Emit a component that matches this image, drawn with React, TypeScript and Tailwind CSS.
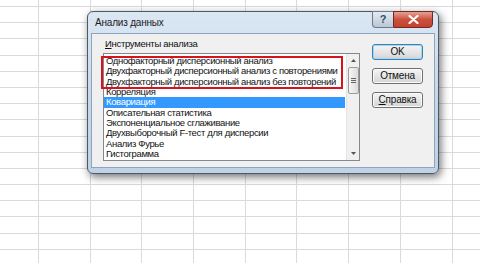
import React from 'react'

const items = [
  'Однофакторный дисперсионный анализ',
  'Двухфакторный дисперсионный анализ с повторениями',
  'Двухфакторный дисперсионный анализ без повторений',
  'Корреляция',
  'Ковариация',
  'Описательная статистика',
  'Экспоненциальное сглаживание',
  'Двухвыборочный F-тест для дисперсии',
  'Анализ Фурье',
  'Гистограмма',
]

function Sheet() {
  const rows = Array.from({ length: 17 })
  const cols = Array.from({ length: 10 })
  return (
    <div className="absolute inset-0 bg-white">
      <div className="grid grid-cols-[39px_repeat(9,51.7px)] grid-rows-[7px_repeat(16,16.2px)]">
        {rows.map((_, r) =>
          cols.map((_, c) => (
            <div key={r + '-' + c} className="border-r border-b border-[#d9dadb]" />
          ))
        )}
      </div>
    </div>
  )
}

function Btn({ children, primary }: { children: React.ReactNode; primary?: boolean }) {
  return (
    <button
      className={
        'shrink-0 w-[51px] h-[16px] rounded-[3px] border text-[10px] leading-none text-[#111] tracking-[-0.2px] bg-gradient-to-b from-[#f4f4f4] via-[#e6e6e6] to-[#d4d4d4] ' +
        (primary ? 'border-[#3c7fb1] shadow-[inset_0_0_0_1px_#9fd8f5]' : 'border-[#707070] shadow-[inset_0_0_0_1px_#fbfbfb]')
      }
    >
      {children}
    </button>
  )
}

export default function App() {
  return (
    <div className="relative w-[480px] h-[263px] overflow-hidden font-['Liberation_Sans',Arial,sans-serif]">
      <Sheet />

      {/* dialog window */}
      <div className="absolute left-[87px] top-[11px] w-[352px] h-[163px] rounded-[6px] border border-[#4b5866] bg-gradient-to-b from-[#dbe7f3] via-[#c8d8ea] to-[#bfd2e6] shadow-[2px_3px_8px_rgba(0,0,0,0.55)] flex flex-col px-[3px] pb-[5px]">
        <div className="h-[21px] flex items-start justify-between">
          <span className="pt-[6px] pl-[4px] text-[10px] tracking-[-0.2px] text-[#1b1b1b] leading-none">Анализ данных</span>
          <div className="flex -mt-px mr-[2px]">
            <div className="w-[21px] h-[17px] rounded-bl-[4px] border border-[#6c7a88] border-r-0 bg-gradient-to-b from-[#e3ebf3] to-[#b9c7d6] flex items-center justify-center text-[11px] font-bold text-[#3b4d60]">
              ?
            </div>
            <div className="w-[40px] h-[17px] rounded-br-[4px] border border-[#6e2a22] bg-gradient-to-b from-[#e8a093] via-[#c9503e] to-[#c4412d] flex items-center justify-center">
              <svg width="11" height="9" viewBox="0 0 11 9">
                <path d="M1.5 1 L9.5 8 M9.5 1 L1.5 8" stroke="#fff" strokeWidth="2.2" strokeLinecap="round" />
              </svg>
            </div>
          </div>
        </div>

        <div className="flex-1 min-h-0 border border-[#8fa4ba] bg-[#f0f0f0] flex pl-[11px] pr-[11px] pt-[4px] gap-[12px]">
          <div className="flex flex-col w-[257px] shrink-0 min-w-0">
            <div className="h-[15px] pl-[2px] text-[9.5px] leading-[12px] tracking-[-0.3px] text-[#111]">
              <span className="underline">И</span>нструменты анализа
            </div>
            <div className="relative h-[108px] border border-[#828790] bg-white flex">
              <div className="flex-1 min-w-0 overflow-hidden pt-[2px] pr-px">
                {items.map((t, i) => (
                  <div
                    key={t}
                    className={
                      'h-[10.33px] pl-[2px] text-[9.5px] leading-[10.33px] tracking-[-0.35px] whitespace-nowrap ' +
                      (i === 4 ? 'bg-[#3399ff] text-white' : 'text-[#111]')
                    }
                  >
                    {t}
                  </div>
                ))}
              </div>
              <div className="w-[13px] shrink-0 bg-[#f0f0f0] border-l border-[#e4e4e4] flex flex-col items-center">
                <div className="h-[13px] flex items-center justify-center">
                  <svg width="5" height="3" viewBox="0 0 5 3"><path d="M0 3 L2.5 0 L5 3Z" fill="#555" /></svg>
                </div>
                <div className="w-[11px] h-[27px] rounded-[2px] border border-[#9a9a9a] bg-gradient-to-r from-[#f6f6f6] to-[#dcdcdc] flex flex-col items-center justify-center gap-[1px]">
                  <div className="w-[5px] h-px bg-[#666]" />
                  <div className="w-[5px] h-px bg-[#666]" />
                  <div className="w-[5px] h-px bg-[#666]" />
                </div>
                <div className="flex-1" />
                <div className="h-[13px] flex items-center justify-center">
                  <svg width="5" height="3" viewBox="0 0 5 3"><path d="M0 0 L2.5 3 L5 0Z" fill="#555" /></svg>
                </div>
              </div>
              <div className="absolute left-[-3px] top-[2px] w-[242px] h-[33px] border-2 border-[#d9131c]" />
            </div>
          </div>

          <div className="flex flex-col shrink-0 gap-[8px] pt-[6px]">
            <Btn primary>OK</Btn>
            <Btn>Отмена</Btn>
            <Btn>
              <span className="underline">С</span>правка
            </Btn>
          </div>
        </div>
      </div>
    </div>
  )
}
